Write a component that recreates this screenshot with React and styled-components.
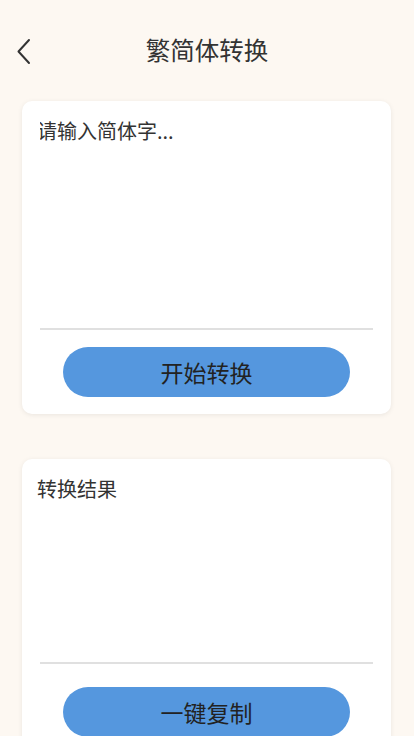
import React from 'react';
import styled, { createGlobalStyle } from 'styled-components';

const GlobalStyle = createGlobalStyle`
  html, body {
    margin: 0;
    padding: 0;
    background: #fdf8f2;
    font-family: "Noto Sans CJK SC", "Noto Sans", sans-serif;
  }
`;

const Page = styled.div`
  min-height: 736px;
  background: #fdf8f2;
  padding: 0 23px 0 22px;
  box-sizing: border-box;
`;

const Header = styled.header`
  height: 101px;
  display: grid;
  grid-template-columns: 40px 1fr 40px;
  align-items: center;
  margin: 0 -7px 0 -6px;
  box-sizing: border-box;
`;

const BackButton = styled.button`
  border: none;
  background: none;
  padding: 0;
  display: flex;
  align-items: center;
  height: 28px;
`;

const Title = styled.h1`
  margin: 0 0 2px 0;
  text-align: center;
  font-size: 24.5px;
  font-weight: 400;
  color: #333;
`;

const Card = styled.section`
  background: #fff;
  border-radius: 10px;
  box-shadow: 0 1px 5px rgba(0, 0, 0, 0.08);
  padding: 16px 18px 17px 18px;
  margin-bottom: ${(p) => p.$gap || 0}px;
  display: flex;
  flex-direction: column;
`;

const TextArea = styled.textarea`
  border: none;
  outline: none;
  resize: none;
  padding: 0;
  margin: 0;
  height: ${(p) => p.$height}px;
  font-family: inherit;
  font-size: 20px;
  line-height: 28px;
  color: #333;
  background: transparent;
  border-bottom: 2px solid #e0e0e0;
  text-indent: -3px;
  &::placeholder {
    color: #333;
  }
`;

const Result = styled.div`
  height: ${(p) => p.$height}px;
  font-size: 20px;
  line-height: 28px;
  color: #333;
  text-indent: -3px;
  border-bottom: 2px solid #e0e0e0;
`;

const Action = styled.button`
  align-self: center;
  margin-top: ${(p) => p.$top}px;
  width: 287px;
  height: 50px;
  border: none;
  border-radius: 25px;
  background: #5597de;
  color: #222;
  font-family: inherit;
  font-size: 23px;
  padding: 0;
`;

function Chevron() {
  return (
    <svg width="16" height="28" viewBox="0 0 16 28" fill="none">
      <path d="M13 3 L2.5 14.5 L13 26" stroke="#333" strokeWidth="2" strokeLinecap="round" strokeLinejoin="round" />
    </svg>
  );
}

export default function App() {
  return (
    <Page>
      <GlobalStyle />
      <Header>
        <BackButton>
          <Chevron />
        </BackButton>
        <Title>繁简体转换</Title>
        <span />
      </Header>
      <Card $gap={45}>
        <TextArea $height={211} placeholder="请输入简体字..." />
        <Action $top={17}>开始转换</Action>
      </Card>
      <Card>
        <Result $height={187}>转换结果</Result>
        <Action $top={23}>一键复制</Action>
      </Card>
    </Page>
  );
}
